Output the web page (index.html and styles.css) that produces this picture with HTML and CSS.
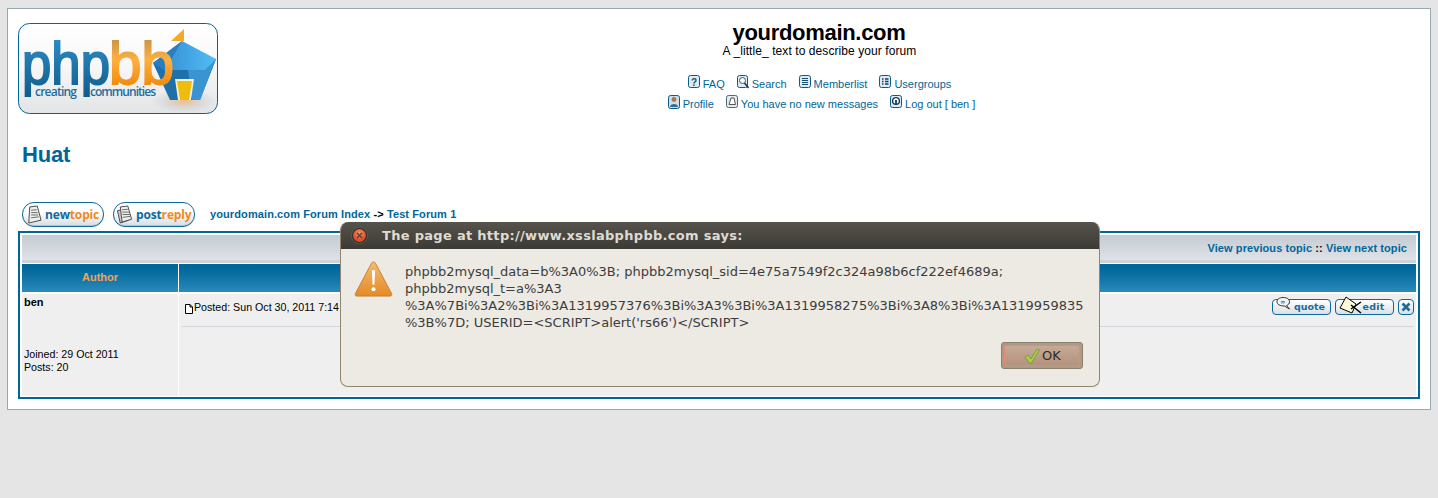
FILE: index.html
```html
<!DOCTYPE html>
<html lang="en">
<head>
<meta charset="utf-8">
<title>yourdomain.com :: Huat</title>
<link rel="stylesheet" href="styles.css">
</head>
<body>
<div class="wrap">
  <header class="head">
    <svg class="logo" width="200" height="91" viewBox="0 0 200 91">
      <defs>
        <linearGradient id="lbg" x1="0" y1="0" x2="0" y2="1"><stop offset="0" stop-color="#fff"/><stop offset=".45" stop-color="#f8f8f8"/><stop offset="1" stop-color="#e2e4e6"/></linearGradient>
        <linearGradient id="lbl" gradientUnits="userSpaceOnUse" x1="0" y1="18" x2="0" y2="76"><stop offset="0" stop-color="#2b8ac2"/><stop offset="1" stop-color="#0f5a88"/></linearGradient>
        <linearGradient id="lor" gradientUnits="userSpaceOnUse" x1="0" y1="16" x2="0" y2="62"><stop offset="0" stop-color="#c99448"/><stop offset=".45" stop-color="#ffb040"/><stop offset="1" stop-color="#f08c10"/></linearGradient>
        <linearGradient id="lrf" x1="0" y1="0" x2="1" y2="0"><stop offset="0" stop-color="#2f86cc"/><stop offset="1" stop-color="#52bdf5"/></linearGradient>
        <radialGradient id="lgl"><stop offset="0" stop-color="#f5b070" stop-opacity=".8"/><stop offset="1" stop-color="#a8c4dc" stop-opacity="0"/></radialGradient>
      </defs>
      <rect x=".5" y=".5" width="199" height="90" rx="11" fill="url(#lbg)" stroke="#006699"/>
      <ellipse cx="166" cy="78" rx="32" ry="12" fill="url(#lgl)"/>
      <polygon points="153,18 166,18 166,6" fill="#f9a825"/>
      <polygon points="135,40 198,36 182,77 152,77" fill="#1f6fa8"/>
      <polygon points="170,47 198,36 182,77 174,77" fill="#3a94d2"/>
      <polygon points="164,18 198,36 187,47 147,47 135,40" fill="url(#lrf)"/>
      <polygon points="164,18 147,47 135,40" fill="#2b7cc0"/>
      <polygon points="157,56 176,56 173,77 160,77" fill="#f6f0d0"/>
      <polygon points="159,58 174,58 171,77 162,77" fill="#eebc0c"/>
      <text class="lg lg-b" x="4" y="61" textLength="88" lengthAdjust="spacingAndGlyphs">php</text>
      <text class="lg lg-o" x="91" y="61" textLength="65" lengthAdjust="spacingAndGlyphs">bb</text>
      <text class="ls" x="17" y="73" textLength="42">creating</text>
      <text class="ls" x="72" y="73" textLength="66">communities</text>
    </svg>
    <div class="site">
      <h1 class="site-name">yourdomain.com</h1>
      <p class="site-desc">A _little_ text to describe your forum</p>
      <nav class="nav nav-first">
        <a><svg class="ni" viewBox="0 0 12 14"><rect x=".5" y=".5" width="11" height="12" rx="2" fill="#dfeaf2" stroke="#0a5c86"/><text class="nq" x="6" y="10.5" text-anchor="middle">?</text></svg>FAQ</a>
        <a><svg class="ni" viewBox="0 0 12 14"><rect x=".5" y=".5" width="10" height="12" rx="2" fill="#dfeaf2" stroke="#0a5c86"/><circle cx="5.5" cy="5.5" r="3" fill="#fff" stroke="#27607f"/><path d="M7.500 8l4 5" stroke="#123f5a" stroke-width="1.600"/></svg>Search</a>
        <a><svg class="ni" viewBox="0 0 12 14"><rect x=".5" y=".5" width="11" height="12" rx="2" fill="#dfeaf2" stroke="#0a5c86"/><path d="M3 3.500h6M3 5.500h6M3 7.500h6M3 9.500h6" stroke="#17506f"/></svg>Memberlist</a>
        <a><svg class="ni" viewBox="0 0 12 14"><rect x=".5" y=".5" width="11" height="12" rx="2" fill="#dfeaf2" stroke="#0a5c86"/><path d="M3 4h1.500M6 4h3.500M3 6.500h1.500M6 6.500h3.500M3 9h1.500M6 9h3.500" stroke="#0f3f5c" stroke-width="1.300"/></svg>Usergroups</a>
      </nav>
      <nav class="nav">
        <a><svg class="ni" viewBox="0 0 12 14"><rect x=".5" y=".5" width="11" height="13" rx="2" fill="#cfdde6" stroke="#0a5c86"/><circle cx="6" cy="4.500" r="2.400" fill="#a9744f"/><path d="M2 12c0-4 8-4 8 0z" fill="#2a6f96"/></svg>Profile</a>
        <a><svg class="ni" viewBox="0 0 12 14"><rect x=".5" y=".5" width="11" height="12" rx="2" fill="#e8eaea" stroke="#456a7e"/><path d="M3 9.500L5 3h3l1.500 6.500z" fill="#fff" stroke="#555"/></svg>You have no new messages</a>
        <a><svg class="ni" viewBox="0 0 12 14"><rect x=".5" y=".5" width="11" height="12" rx="2" fill="#dfeaf2" stroke="#0a5c86"/><circle cx="6" cy="6" r="3.400" fill="#fff" stroke="#123f5a" stroke-width="1.400"/><path d="M6 5v5" stroke="#123f5a" stroke-width="1.800"/></svg>Log out [ ben ]</a>
      </nav>
    </div>
  </header>

  <h2 class="topic-title">Huat</h2>

  <div class="actions">
    <a class="btn"><svg class="bi" viewBox="0 0 18 20"><path d="M5 2l8-1 4 15-13 3z" fill="#eee" stroke="#444"/><path d="M6.500 5.500l6-.5M6.500 8l7 0M6.500 10.500l7.500 0M6.500 13.500l8-1" stroke="#666"/></svg><span class="bt-a">new</span><span class="bt-b">topic</span></a>
    <a class="btn"><svg class="bi" viewBox="0 0 18 20"><path d="M1.500 6l9-2 3 12-9 3z" fill="#ccc" stroke="#444"/><path d="M4.500 2l8-1 4 14-10 3z" fill="#eee" stroke="#444"/><path d="M6.500 5l6-.5M6.500 7.500l7 0M7 10l7.500 0M7 13l8-1" stroke="#666"/></svg><span class="bt-a">post</span><span class="bt-b">reply</span></a>
    <div class="crumbs"><a>yourdomain.com Forum Index</a> <span class="sep">-&gt;</span> <a>Test Forum 1</a></div>
  </div>

  <section class="forum">
    <div class="topbar"><a>View previous topic</a> <span class="sep">::</span> <a>View next topic</a></div>
    <div class="cols heads">
      <div class="th">Author</div>
      <div class="th"></div>
    </div>
    <div class="cols post">
      <div class="author">
        <strong class="name">ben</strong>
        <div class="meta">Joined: 29 Oct 2011<br>Posts: 20</div>
      </div>
      <div class="body">
        <div class="post-head">
          <svg class="doc" width="8" height="10" viewBox="0 0 8 10"><path d="M.5.5h4.500l2.500 2.500v6.500h-7z" fill="#fff" stroke="#000"/><path d="M5 .5v2.500h2.500" fill="none" stroke="#000"/></svg>
          <span class="posted">Posted: Sun Oct 30, 2011 7:14</span>
          <div class="tools">
            <a class="tool wide"><svg class="ti ti-q" width="15" height="14" viewBox="0 0 15 14"><path d="M7 .5c4 0 6.500 1.600 6.500 4.300 0 1.700-1 3-3 3.700l3 3.500-5-3C4 9 1 7.500 1 4.800 1 2.100 3.500.5 7 .5z" fill="#f3f3f3" stroke="#333"/><text class="qm" x="4.500" y="9.500">”</text></svg><span class="tl">quote</span></a>
            <a class="tool wide"><svg class="ti ti-e" width="24" height="20" viewBox="0 0 24 20"><polygon points="7,1 17,8 13,17 1,12" fill="#fdf8d8" stroke="#000"/><path d="M12 9l10 8M22 6l-10 7" stroke="#000" stroke-width="1.500"/></svg><span class="tl tl-e">edit</span></a>
            <a class="tool"><svg width="10" height="10" viewBox="0 0 10 10"><path d="M1.500 1.500l7 7M8.500 1.500l-7 7" stroke="#1d6b96" stroke-width="2.600"/></svg></a>
          </div>
        </div>
      </div>
    </div>
  </section>
</div>

<div class="dialog" role="alertdialog">
  <div class="d-title">
    <svg class="d-close" width="17" height="17" viewBox="0 0 17 17"><defs><radialGradient id="cl" cy=".35"><stop offset="0" stop-color="#f49a72"/><stop offset="1" stop-color="#d9502a"/></radialGradient></defs><circle cx="8.500" cy="8.500" r="8" fill="#2e2c28" stroke="#5f5c55"/><circle cx="8.500" cy="8.500" r="6.500" fill="url(#cl)"/><path d="M6 6l5 5M11 6l-5 5" stroke="#5a3a30" stroke-width="1.300"/></svg>
    <span class="d-head">The page at http://www.xsslabphpbb.com says:</span>
  </div>
  <div class="d-main">
    <svg class="d-warn" width="39" height="38" viewBox="0 0 40 38"><defs><linearGradient id="wr" x1="0" y1="0" x2="0" y2="1"><stop offset="0" stop-color="#f2bc72"/><stop offset="1" stop-color="#e58a26"/></linearGradient></defs><path d="M20 1.500c1 0 1.600.6 2 1.300l16.500 31c.7 1.300 0 2.700-1.500 2.700H3c-1.500 0-2.200-1.400-1.500-2.700L18 2.800c.4-.7 1-1.300 2-1.300z" fill="url(#wr)" stroke="#c77f2e"/><path d="M18.300 10h3.400l-.8 15h-1.800z" fill="#fff"/><circle cx="20" cy="29.500" r="2.100" fill="#fff"/></svg>
    <div class="d-content">
      <p class="d-msg">phpbb2mysql_data=b%3A0%3B; phpbb2mysql_sid=4e75a7549f2c324a98b6cf222ef4689a;<br>phpbb2mysql_t=a%3A3<br>%3A%7Bi%3A2%3Bi%3A1319957376%3Bi%3A3%3Bi%3A1319958275%3Bi%3A8%3Bi%3A1319959835<br>%3B%7D; USERID=&lt;SCRIPT&gt;alert('rs66')&lt;/SCRIPT&gt;</p>
      <div class="d-actions">
        <button class="d-ok"><span class="d-ok-in"><svg width="16" height="16" viewBox="0 0 16 16"><path d="M1 9l3-2 3 4L13 1l2.500 1L7.500 15H5.500z" fill="#a8cf45" stroke="#6f9a2a" stroke-width=".8"/></svg>OK</span></button>
      </div>
    </div>
  </div>
</div>
</body>
</html>
```

FILE: styles.css
```css
* { box-sizing: border-box; }
html, body { margin: 0; height: 100%; }
body {
  background: #e5e5e5;
  padding: 8px 7px;
  font-family: "Liberation Sans", Arial, sans-serif;
  color: #000;
  overflow: hidden;
}
a { color: #006699; }

.wrap {
  background: #fff;
  border: 1px solid #98aab1;
  width: 1424px;
  height: 402px;
  padding: 14px 10px 0;
}

.head { display: flex; align-items: flex-start; height: 91px; }
.logo { display: block; flex: none; }
.lg { font: 400 60px "Liberation Sans", sans-serif; stroke-width: 2; }
.lg-b { fill: url(#lbl); stroke: url(#lbl); }
.lg-o { fill: url(#lor); stroke: url(#lor); }
.ls { font: 600 12px "Open Sans", sans-serif; fill: #1c6d9e; }
.site { flex: 1; text-align: center; }
.site-name { margin: 0; font-size: 22px; letter-spacing: -.3px; line-height: 18px; padding-top: 1px; font-weight: 700; }
.site-desc { margin: 0 0 0 1px; font-size: 12px; letter-spacing: .08px; line-height: 14px; padding-top: 2px; }
.nav { display: flex; justify-content: center; gap: 12px; font-size: 11px; line-height: 20px; height: 20px; padding-left: 5px; }
.nav.nav-first { margin-top: 16px; padding-left: 1px; }
.nav a { display: block; color: #006699; white-space: nowrap; }
.ni { width: 12px; height: 14px; margin-right: 3px; vertical-align: baseline; margin-bottom: -1px; }
.nq { font: 700 10px "Liberation Sans", sans-serif; fill: #17506f; }

.topic-title { margin: 28px 0 0 4px; font-size: 22px; letter-spacing: -.2px; line-height: 26px; font-weight: 700; color: #006699; }

.actions { display: flex; align-items: center; height: 25px; margin-top: 34px; padding-left: 4px; gap: 9px; }
.btn {
  display: flex; align-items: center;
  width: 82px; height: 25px;
  padding-left: 2px;
  border: 1px solid #0a6a9a; border-radius: 12px;
  background: linear-gradient(#ffffff 40%, #d8dde2);
  box-shadow: inset 0 -1px 0 #b8c2ca;
  font: 700 12px "Open Sans", sans-serif;
  letter-spacing: -.15px;
}
.bi { width: 17px; height: 19px; margin-right: 3px; flex: none; }
.bt-a { color: #0f6a9c; }
.bt-b { color: #f08a1d; }
.crumbs { margin: 0 0 1px 6px; font-size: 11px; letter-spacing: .1px; font-weight: 700; }
.sep { color: #000; font-weight: 700; }

.forum {
  margin-top: 4px;
  width: 1402px; height: 168px;
  border: 2px solid #006699;
  padding: 2px 2px 1px 2px;
  display: flex; flex-direction: column; gap: 1px;
  background: #fff;
}
.topbar {
  height: 28px;
  background: linear-gradient(#c5cbd3, #dfe2e6 88%, #cdd2d8 88%);
  font-size: 11px; font-weight: 700;
  letter-spacing: .08px;
  text-align: right; padding: 6px 9px 0 0;
  line-height: 15px;
}
.cols { display: grid; grid-template-columns: 156px 1fr; column-gap: 1px; }
.heads { height: 28px; }
.th {
  background: linear-gradient(#006699 15%, #2a8abb);
  color: #f0a45c;
  font-size: 11px; font-weight: 700;
  text-align: center; line-height: 27px;
}
.post { flex: 1; margin-top: 1px; }
.author { background: #efefef; padding: 2px 2px; font-size: 10.67px; line-height: 13px; }
.name { display: block; font-size: 11px; }
.meta { margin-top: 39px; }
.body { background: #efefef; padding: 0 2px 0 3px; }
.post-head { display: flex; align-items: flex-start; height: 33px; border-bottom: 1px solid #d1d7dc; font-size: 10.67px; padding-top: 5px; }
.doc { margin: 5px 1px 0 3px; flex: none; }
.posted { line-height: 16px; }
.tools { margin-left: auto; display: flex; gap: 4px; }
.tool {
  position: relative;
  display: flex; align-items: center; justify-content: center;
  width: 16px; height: 16px;
  border: 1px solid #0a6a9a; border-radius: 4px;
  background: linear-gradient(#fff, #d9e0e6);
}
.tool.wide { width: 59px; }
.tl { font: 700 9.5px "DejaVu Sans", sans-serif; color: #1d6b96; padding-left: 16px; line-height: 14px; }
.tl-e { letter-spacing: .2px; padding-left: 18px; }
.ti { position: absolute; }
.ti-q { left: 3px; top: -3px; }
.ti-e { left: 3px; top: -4px; }
.qm { font: 700 9px "Liberation Serif", serif; fill: #2b3f88; }

.dialog {
  position: absolute;
  left: 340px; top: 222px;
  width: 760px; height: 165px;
  background: #edeae3;
  border: 1px solid #8f8571;
  border-top: 0;
  border-radius: 8px;
  overflow: hidden;
  font-family: "DejaVu Sans", sans-serif;
}
.d-title {
  display: flex; align-items: center;
  height: 27px;
  background: linear-gradient(#56534c, #3c3a35);
  padding-left: 11px;
  margin: 0 -1px;
}
.d-close { flex: none; }
.d-head { margin-left: 14px; font-size: 13px; font-weight: 700; color: #dfdbd2; letter-spacing: .3px; white-space: nowrap; }
.d-main { display: flex; padding: 11px 16px 0 13px; }
.d-warn { flex: none; margin-right: 12px; }
.d-content { flex: 1; }
.d-msg { margin: 0; font-size: 13px; line-height: 17px; color: #3c3c3c; white-space: nowrap; padding-top: 3px; }
.d-actions { display: flex; justify-content: flex-end; margin-top: 11px; }
.d-ok {
  width: 82px; height: 27px; padding: 2px;
  background: #b09a86;
  border: 1px solid #8b8170;
  border-radius: 3px;
  font: 13px "DejaVu Sans", sans-serif;
  color: #2e2a26;
  display: flex;
}
.d-ok-in {
  flex: 1;
  display: flex; align-items: center; justify-content: center; gap: 2px;
  background: linear-gradient(#c6a996, #b4937e);
  border: 1px solid #e58a6e;
  border-radius: 2px;
}
```
